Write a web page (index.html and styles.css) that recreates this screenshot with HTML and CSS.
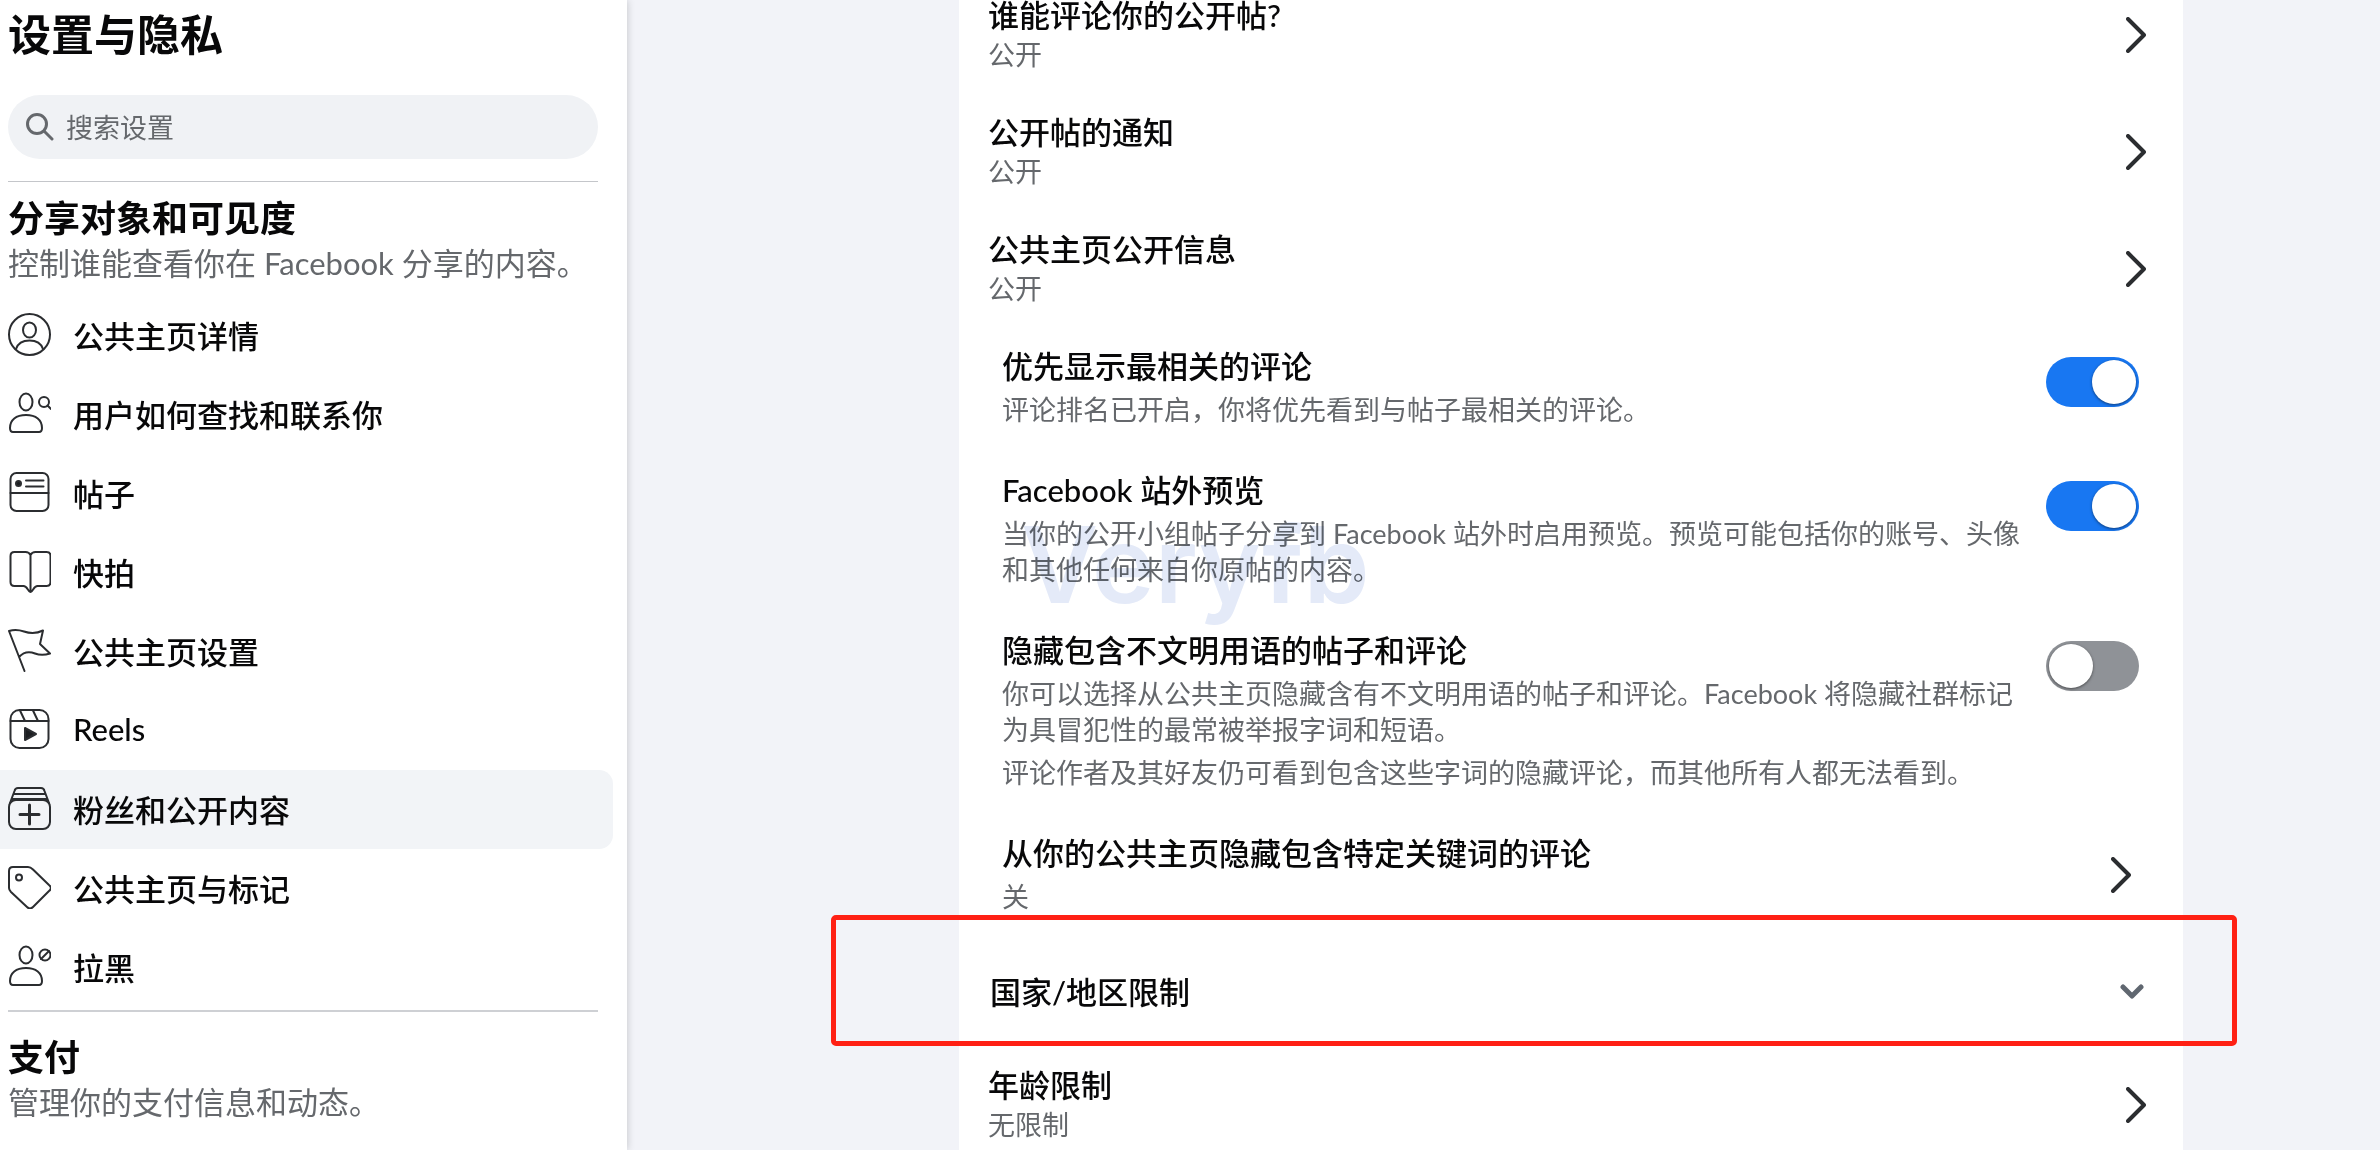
FILE: index.html
```html
<!DOCTYPE html>
<html lang="zh-CN">
<head>
  <meta charset="utf-8">
  <title>设置与隐私</title>
  <link rel="stylesheet" href="styles.css">
</head>
<body>
  <aside class="sidebar">
    <h1 class="sidebar-title">设置与隐私</h1>
    <label class="search">
      <svg class="search-icon" viewBox="0 0 28 28"><circle cx="11" cy="11" r="9.5"/><path d="M18 18l8 8"/></svg>
      <input type="search" placeholder="搜索设置" aria-label="搜索设置">
    </label>

    <section class="group">
      <h2>分享对象和可见度</h2>
      <p>控制谁能查看你在 Facebook 分享的内容。</p>
    </section>

    <nav class="menu">
      <a href="#"><svg class="icon" viewBox="0 0 43 43"><circle cx="21.500" cy="21.500" r="20.500"/><ellipse cx="21.500" cy="17" rx="6.500" ry="7.500"/><path d="M8 36c2-6 6-8.500 13.500-8.500S33 30 35 36"/></svg>公共主页详情</a>
      <a href="#"><svg class="icon" viewBox="0 0 43 43"><ellipse cx="18" cy="10" rx="6.500" ry="8.500"/><path d="M2 36c0-8 6-13 16-13s16 5 16 13c0 3-1 4-3 4H5c-2 0-3-1-3-4z"/><circle cx="36" cy="10" r="5"/><path d="M39.500 13.500l3.500 3.500"/></svg>用户如何查找和联系你</a>
      <a href="#"><svg class="icon" viewBox="0 0 43 43"><rect x="2.500" y="2" width="38" height="38" rx="6"/><path d="M2.500 22h38M18 9.500h17.500M18 15.500h17.500"/><circle class="solid" cx="10.500" cy="12.500" r="2.500"/></svg>帖子</a>
      <a href="#"><svg class="icon" viewBox="0 0 43 43"><path d="M22.500 5c-1-2-2.500-3-5-3h-11c-3 0-4 1-4 4v26c0 3 1 4 4 4h9c4 0 4 5 7 6 3-1 3-6 7-6h9c3 0 4-1 4-4V6c0-3-1-4-4-4h-11c-2.500 0-4 1-5 3zv37"/></svg>快拍</a>
      <a href="#"><svg class="icon" viewBox="0 0 43 43"><path d="M16.500 42L1 2c5-1.500 9-1.500 15 .5 7 2.500 13 2 19-1L32 15l10 9.500c-6 2-10 2-15 0s-11-2-16 3.500"/></svg>公共主页设置</a>
      <a href="#"><svg class="icon" viewBox="0 0 43 43"><rect x="2.500" y="2" width="38" height="38" rx="9"/><path d="M2.500 13h38M12 2.500l5 10.500M25 2.500L30 13"/><path class="solid" d="M17 20v12l11-6z"/></svg>Reels</a>
      <a href="#" class="active" aria-current="page"><svg class="icon" viewBox="0 0 43 43"><rect x="1" y="13" width="41" height="29" rx="7"/><path d="M2 16L6.500 4C7 2 8 1 10 1h23c2 0 3 1 3.500 3L41 16M6 7h31M4 12h35"/><path class="heavy" d="M21.500 18v19M12 27.500h19"/></svg>粉丝和公开内容</a>
      <a href="#"><svg class="icon" viewBox="0 0 43 43"><path d="M1 5c0-3 1-4 4-4h15c2 0 3 .5 5 2.500L41 19c2.500 2 2.500 4 0 6L25 41c-2 2-4 2-6 0L3 26c-1.500-1.500-2-2.500-2-4z"/><circle cx="11" cy="11.500" r="3"/></svg>公共主页与标记</a>
      <a href="#"><svg class="icon" viewBox="0 0 43 43"><ellipse cx="18" cy="10" rx="6.500" ry="8.500"/><path d="M2 36c0-8 6-13 16-13s16 5 16 13c0 3-1 4-3 4H5c-2 0-3-1-3-4z"/><circle cx="37" cy="10" r="5.500"/><path d="M33 14l8-8"/></svg>拉黑</a>
    </nav>

    <section class="group">
      <h2>支付</h2>
      <p>管理你的支付信息和动态。</p>
    </section>
  </aside>

  <main class="main">
    <div class="card">
      <a href="#" class="row">
        <span class="text"><span class="title">谁能评论你的公开帖?</span><span class="value">公开</span></span>
        <svg class="chevron" viewBox="0 0 20 36"><path d="M2 2l16 16L2 34"/></svg>
      </a>
      <a href="#" class="row">
        <span class="text"><span class="title">公开帖的通知</span><span class="value">公开</span></span>
        <svg class="chevron" viewBox="0 0 20 36"><path d="M2 2l16 16L2 34"/></svg>
      </a>
      <a href="#" class="row">
        <span class="text"><span class="title">公共主页公开信息</span><span class="value">公开</span></span>
        <svg class="chevron" viewBox="0 0 20 36"><path d="M2 2l16 16L2 34"/></svg>
      </a>

      <div class="option">
        <div class="text">
          <label class="title" for="ranking">优先显示最相关的评论</label>
          <p>评论排名已开启，你将优先看到与帖子最相关的评论。</p>
        </div>
        <input type="checkbox" class="switch" id="ranking" checked>
      </div>
      <div class="option">
        <div class="text">
          <label class="title" for="preview">Facebook 站外预览</label>
          <p>当你的公开小组帖子分享到 Facebook 站外时启用预览。预览可能包括你的账号、头像和其他任何来自你原帖的内容。</p>
        </div>
        <input type="checkbox" class="switch" id="preview" checked>
        <span class="watermark">Veryfb</span>
      </div>
      <div class="option">
        <div class="text">
          <label class="title" for="profanity">隐藏包含不文明用语的帖子和评论</label>
          <p>你可以选择从公共主页隐藏含有不文明用语的帖子和评论。Facebook 将隐藏社群标记为具冒犯性的最常被举报字词和短语。</p>
          <p>评论作者及其好友仍可看到包含这些字词的隐藏评论，而其他所有人都无法看到。</p>
        </div>
        <input type="checkbox" class="switch" id="profanity">
      </div>
      <a href="#" class="option option-link">
        <span class="text"><span class="title">从你的公共主页隐藏包含特定关键词的评论</span><span class="value">关</span></span>
        <svg class="chevron" viewBox="0 0 20 36"><path d="M2 2l16 16L2 34"/></svg>
      </a>

      <button type="button" class="country">
        <span class="title">国家/地区限制</span>
        <svg class="caret" viewBox="0 0 24 16"><path d="M3 3l9 9 9-9"/></svg>
      </button>

      <a href="#" class="row">
        <span class="text"><span class="title">年龄限制</span><span class="value">无限制</span></span>
        <svg class="chevron" viewBox="0 0 20 36"><path d="M2 2l16 16L2 34"/></svg>
      </a>
    </div>
  </main>
</body>
</html>
```

FILE: styles.css
```css
* {
  box-sizing: border-box;
}

body {
  display: flex;
  height: 100vh;
  margin: 0;
  overflow: hidden;
  background-color: #f2f3f8;
  color: #080809;
  font-family: Lato, "Noto Sans CJK SC", sans-serif;
  font-size: 31px;
}

h1, h2, p {
  margin: 0;
}

a {
  color: inherit;
  text-decoration: none;
}

svg {
  flex: none;
  fill: none;
  stroke: #2b2d30;
  stroke-linecap: round;
  stroke-linejoin: round;
}

/* sidebar */
.sidebar {
  flex: none;
  width: 627px;
  padding: 3px 29px 0 8px;
  background-color: #fff;
  box-shadow: 0 0 8px rgba(0, 0, 0, 0.2);
}

.sidebar-title {
  font-size: 43px;
  line-height: 64px;
}

.search {
  display: flex;
  align-items: center;
  gap: 12px;
  height: 64px;
  margin: 28px 0 22px;
  padding: 0 18px;
  border-radius: 32px;
  background-color: #f0f2f5;
}

.search-icon {
  width: 28px;
  height: 28px;
  stroke: #65686c;
  stroke-width: 3;
}

.search input {
  flex: 1;
  padding: 0;
  border: none;
  outline: none;
  background: none;
  font: inherit;
  font-size: 27px;
}

.search input::placeholder {
  color: #65686c;
}

.group {
  padding: 13px 0 11px;
  border-top: 1px solid #c4c6ca;
}

.group h2 {
  font-size: 36px;
  line-height: 46px;
}

.group p {
  color: #65686c;
  line-height: 44px;
  white-space: nowrap;
}

.menu {
  margin: 0 -15px 3px -8px;
}

.menu + .group {
  padding-top: 22px;
  border-top: 2px solid #ced0d4;
}

.menu a {
  display: flex;
  align-items: center;
  gap: 22px;
  height: 79px;
  padding: 0 0 3px 8px;
  border-radius: 0 14px 14px 0;
  font-weight: 500;
}

.menu .active {
  background-color: #f2f4f7;
}

.icon {
  width: 43px;
  height: 43px;
  stroke-width: 2;
}

.icon .solid {
  fill: #1c1e21;
}

.icon .heavy {
  stroke-width: 3;
}

/* settings list */
.main {
  flex: 1;
  padding: 0 197px 0 332px;
}

.card {
  margin-top: -24px;
  background-color: #fff;
}

.row, .option {
  display: flex;
  padding: 20px 37px 19px 29px;
}

.row {
  align-items: center;
}

.option {
  position: relative;
  gap: 8px;
  padding: 20px 44px 23px 43px;
}

.option-link {
  align-items: center;
  padding-right: 52px;
}

.text {
  flex: 1;
}

.title, .value {
  display: block;
}

.title {
  font-weight: 500;
  line-height: 38px;
}

.value, .text p {
  color: #65686c;
  font-size: 27px;
  line-height: 36px;
}

.row .value {
  padding: 3px 0 1px;
}

.option .value, .option p {
  margin-top: 7px;
}

.chevron {
  width: 20px;
  height: 36px;
  stroke-width: 4;
}

.caret {
  width: 24px;
  height: 16px;
  stroke: #606770;
  stroke-width: 5;
}

.switch {
  flex: none;
  width: 93px;
  height: 50px;
  margin: 10px 0 0;
  padding: 3px;
  border-radius: 25px;
  background-color: #8f9297;
  appearance: none;
}

.switch::before {
  content: "";
  display: block;
  width: 44px;
  height: 44px;
  border-radius: 50%;
  background-color: #fff;
  box-shadow: 0 1px 3px rgba(0, 0, 0, 0.5);
}

.switch:checked {
  background-color: #1877f2;
}

.switch:checked::before {
  margin-left: auto;
}

.watermark {
  position: absolute;
  top: 54px;
  left: 62px;
  color: #e4eaf8;
  font-family: Inter, sans-serif;
  font-size: 106px;
  font-weight: 600;
  line-height: 120px;
  mix-blend-mode: multiply;
  pointer-events: none;
}

.country {
  position: relative;
  display: flex;
  align-items: center;
  justify-content: space-between;
  width: 100%;
  height: 108px;
  padding: 0 39px 0 31px;
  border: none;
  background: none;
  color: inherit;
  font: inherit;
  text-align: left;
}

/* red outline around the country row, wider than the card */
.country::after {
  content: "";
  position: absolute;
  top: -23px;
  right: -54px;
  bottom: 0;
  left: -128px;
  border: 5px solid #ff2014;
  border-radius: 5px;
}
```
